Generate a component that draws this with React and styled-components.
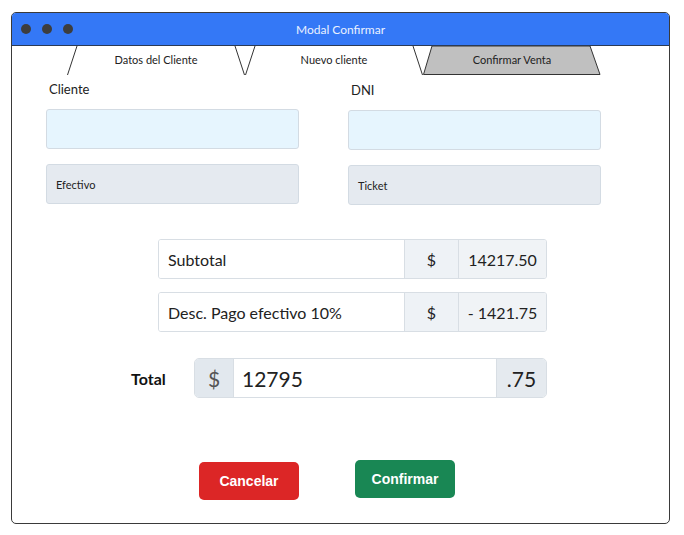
import React from "react";
import styled, { createGlobalStyle } from "styled-components";

const GlobalStyle = createGlobalStyle`
  body {
    margin: 0;
    background: #ffffff;
    font-family: Lato, "Open Sans", sans-serif;
    color: #222;
  }
`;

const Ventana = styled.div`
  margin: 12px 0 0 11px;
  width: 659px;
  height: 512px;
  border: 1.5px solid #3a3a3a;
  border-radius: 5px;
  overflow: hidden;
  box-sizing: border-box;
  background: #fff;
`;

const BarraTitulo = styled.div`
  height: 33px;
  background: #3478f6;
  border-bottom: 1px solid #2a3a55;
  display: grid;
  grid-template-columns: 1fr auto 1fr;
  align-items: center;
  padding: 0 9px;
  box-sizing: border-box;
`;

const Puntos = styled.div`
  display: flex;
  gap: 11px;
`;

const Punto = styled.span`
  width: 10px;
  height: 10px;
  border-radius: 50%;
  background: #3d3d3d;
`;

const Titulo = styled.div`
  color: #eaf1ff;
  font-size: 12px;
`;

const Pestanas = styled.div`
  display: flex;
  margin-left: 55px;
  height: 29px;
`;

const Pestana = styled.div`
  position: relative;
  width: 178px;
  height: 29px;
  display: flex;
  align-items: center;
  justify-content: center;
  font-size: 11px;
  color: #222;
  padding-bottom: 3px;
  box-sizing: border-box;

  svg {
    position: absolute;
    inset: 0;
  }

  span {
    position: relative;
  }
`;

const Formulario = styled.div`
  display: flex;
  gap: 49px;
  margin: 6px 0 0 34px;
`;

const Columna = styled.div`
  width: 253px;
  display: flex;
  flex-direction: column;
  padding-top: ${(p) => (p.$bajo ? "1px" : "0")};
`;

const Etiqueta = styled.div`
  font-size: 13px;
  line-height: 16px;
  padding-left: 3px;
  margin-bottom: 12px;
`;

const Campo = styled.div`
  height: 40px;
  box-sizing: border-box;
  border: 1px solid #d3dbe3;
  border-radius: 3px;
  background: ${(p) => (p.$tipo === "select" ? "#e5eaf0" : "#e6f5fe")};
  margin-bottom: 15px;
  display: flex;
  align-items: center;
  padding-left: 9px;
  font-size: 11px;
  color: #222;
`;

const Resumen = styled.div`
  margin: 19px 0 0 146px;
  width: 389px;
  display: flex;
  flex-direction: column;
  gap: 13px;
`;

const Fila = styled.div`
  display: flex;
  height: 40px;
  box-sizing: border-box;
  border: 1px solid #d8dee4;
  border-radius: 3px;
  overflow: hidden;
  font-size: 16px;
`;

const Celda = styled.div`
  display: flex;
  align-items: center;
  justify-content: ${(p) => p.$align || "flex-start"};
  width: ${(p) => p.$w};
  flex: ${(p) => (p.$w ? "none" : "1")};
  padding: ${(p) => p.$pad || "0"};
  background: ${(p) => p.$bg || "#fff"};
  border-left: ${(p) => (p.$sep ? "1px solid #d8dee4" : "none")};
  box-sizing: border-box;
  color: ${(p) => p.$color || "#222"};
`;

const FilaTotal = styled.div`
  display: flex;
  align-items: center;
  margin: 26px 0 0 119px;
`;

const EtiquetaTotal = styled.div`
  width: 63px;
  font-size: 16px;
  font-weight: 700;
  color: #111;
`;

const GrupoTotal = styled(Fila)`
  width: 353px;
  font-size: 21px;
  border-radius: 5px;
`;

const Botones = styled.div`
  display: flex;
  align-items: flex-start;
  gap: 56px;
  margin: 62px 0 0 187px;
`;

const Boton = styled.button`
  width: 100px;
  height: 38px;
  margin-top: ${(p) => p.$offset || "0"};
  border: none;
  border-radius: 5px;
  background: ${(p) => p.$color};
  color: #fff;
  font-family: "Liberation Sans", Arial, sans-serif;
  font-weight: 700;
  font-size: 14px;
  cursor: pointer;
`;

const FormaPestana = ({ activa }) => (
  <svg width="178" height="29" viewBox="0 0 178 29">
    {activa ? (
      <polygon
        points="9,0 167,0 177,28.5 0.5,28.5"
        fill="#c0c0c0"
        stroke="#333"
        strokeWidth="1"
      />
    ) : (
      <g stroke="#333" strokeWidth="1" fill="none">
        <line x1="10" y1="0" x2="0.5" y2="29" />
        <line x1="168" y1="0" x2="177.5" y2="29" />
      </g>
    )}
  </svg>
);

const pestanas = [
  { nombre: "Datos del Cliente" },
  { nombre: "Nuevo cliente" },
  { nombre: "Confirmar Venta", activa: true },
];

const filas = [
  { texto: "Subtotal", valor: "14217.50" },
  { texto: "Desc. Pago efectivo 10%", valor: "- 1421.75" },
];

export default function App() {
  return (
    <>
      <GlobalStyle />
      <Ventana>
        <BarraTitulo>
          <Puntos>
            <Punto />
            <Punto />
            <Punto />
          </Puntos>
          <Titulo>Modal Confirmar</Titulo>
          <div />
        </BarraTitulo>

        <Pestanas>
          {pestanas.map((p) => (
            <Pestana key={p.nombre}>
              <FormaPestana activa={p.activa} />
              <span>{p.nombre}</span>
            </Pestana>
          ))}
        </Pestanas>

        <Formulario>
          <Columna>
            <Etiqueta>Cliente</Etiqueta>
            <Campo />
            <Campo $tipo="select">Efectivo</Campo>
          </Columna>
          <Columna $bajo>
            <Etiqueta>DNI</Etiqueta>
            <Campo />
            <Campo $tipo="select">Ticket</Campo>
          </Columna>
        </Formulario>

        <Resumen>
          {filas.map((f) => (
            <Fila key={f.texto}>
              <Celda $pad="0 0 0 9px">{f.texto}</Celda>
              <Celda $w="54px" $align="center" $bg="#eef2f6" $sep>
                $
              </Celda>
              <Celda $w="88px" $align="center" $bg="#f0f3f6" $sep>
                {f.valor}
              </Celda>
            </Fila>
          ))}
        </Resumen>

        <FilaTotal>
          <EtiquetaTotal>Total</EtiquetaTotal>
          <GrupoTotal>
            <Celda $w="38px" $align="center" $bg="#e2e8ee" $color="#555">
              $
            </Celda>
            <Celda $pad="0 0 0 8px" $sep>
              12795
            </Celda>
            <Celda $w="50px" $align="center" $bg="#e5eaef" $sep>
              .75
            </Celda>
          </GrupoTotal>
        </FilaTotal>

        <Botones>
          <Boton $color="#dc2626" $offset="2px">Cancelar</Boton>
          <Boton $color="#198754">Confirmar</Boton>
        </Botones>
      </Ventana>
    </>
  );
}
